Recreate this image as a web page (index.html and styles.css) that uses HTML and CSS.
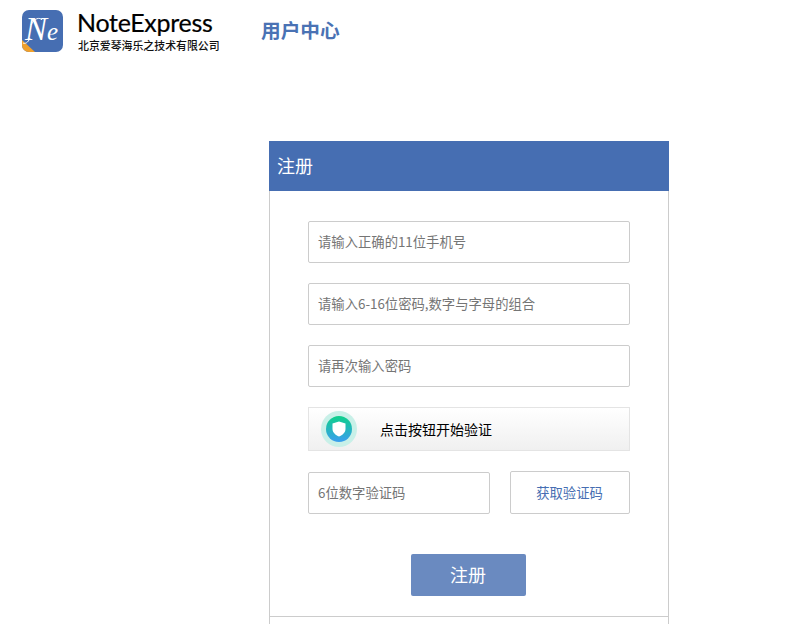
FILE: index.html
```html
<!DOCTYPE html>
<html lang="zh-CN">
<head>
<meta charset="utf-8">
<title>用户中心</title>
<link rel="stylesheet" href="styles.css">
</head>
<body>
<header class="topbar">
  <div class="brand">
    <svg class="logo" width="41" height="42" viewBox="0 0 41 42">
      <defs><clipPath id="lc"><rect width="41" height="42" rx="7"/></clipPath></defs>
      <g clip-path="url(#lc)">
        <rect width="41" height="42" fill="#466eb2"/>
        <polygon points="0,30 13,42 0,42" fill="#f0a02c"/>
        <path d="M1 33 C3 34 6 33 8 28" fill="none" stroke="#fff" stroke-width="1"/>
        <path d="M9 15 C12 8 18 7 20 10" fill="none" stroke="#fff" stroke-width="1"/>
      </g>
      <text class="logo-text" x="3" y="30">N<tspan class="logo-e">e</tspan></text>
    </svg>
    <div class="brand-text">
      <div class="brand-name">NoteExpress</div>
      <div class="brand-sub">北京爱琴海乐之技术有限公司</div>
    </div>
  </div>
  <div class="page-title">用户中心</div>
</header>
<main class="card">
  <div class="card-head">注册</div>
  <form class="card-body">
    <input class="field" type="text" placeholder="请输入正确的11位手机号">
    <input class="field" type="text" placeholder="请输入6-16位密码,数字与字母的组合">
    <input class="field" type="text" placeholder="请再次输入密码">
    <div class="captcha">
      <span class="captcha-ring">
        <span class="captcha-dot">
          <svg width="14" height="16" viewBox="0 0 14 16"><path d="M7 0.5 L13.5 2.5 V8 C13.5 11.5 10.5 14.3 7 15.5 C3.5 14.3 0.5 11.5 0.5 8 V2.5 Z" fill="#fff"/></svg>
        </span>
      </span>
      <span class="captcha-text">点击按钮开始验证</span>
    </div>
    <div class="code-row">
      <input class="field code-input" type="text" placeholder="6位数字验证码">
      <button class="code-btn" type="button">获取验证码</button>
    </div>
    <button class="submit" type="button">注册</button>
  </form>
  <div class="card-foot"></div>
</main>
</body>
</html>
```
FILE: styles.css
```css
* { box-sizing: border-box; }
html, body { margin: 0; padding: 0; height: 624px; overflow: hidden; background: #fff; }
body { font-family: "Noto Sans CJK SC", "Liberation Sans", sans-serif; color: #333; }

.topbar { display: flex; align-items: flex-start; height: 141px; padding: 10px 0 0 22px; }
.brand { display: flex; width: 240px; }
.logo { flex: none; }
.logo-text { font-family: "Liberation Serif", serif; font-style: italic; font-size: 33px; fill: #fff; }
.logo-e { font-size: 25px; }
.brand-text { margin-left: 14px; }
.brand-name { font-family: "Lato", sans-serif; font-size: 25px; line-height: 24px; color: #000; letter-spacing: -0.3px; -webkit-text-stroke: 0.2px #000; }
.brand-sub { font-size: 10.9px; line-height: 14px; margin: 4px 0 0 1px; color: #111; font-weight: 500; white-space: nowrap; }
.page-title { font-size: 19.7px; line-height: 28px; margin-top: 6px; margin-left: -1px; font-weight: 700; color: #4a72b4; }

.card { width: 400px; margin-left: 269px; border-left: 1px solid #ccc; border-right: 1px solid #ccc; }
.card-head { height: 50px; margin: 0 -1px; padding-left: 8px; background: #466eb2; color: #fff; font-size: 18px; line-height: 48px; }
.card-body { display: flex; flex-direction: column; align-items: flex-start; padding: 30px 0 20px 38px; }
.field { display: block; width: 322px; height: 42px; margin-bottom: 20px; padding: 0 9px 2px; border: 1px solid #ccc; border-radius: 2px; background: #fff; font-family: inherit; font-size: 13.33px; color: #333; outline: none; }
.field::placeholder { color: #757575; opacity: 1; }

.captcha { display: flex; align-items: center; width: 322px; height: 44px; padding-left: 12px; border: 1px solid #e4e4e4; background: linear-gradient(#fff, #f0f0f0); }
.captcha-ring { display: flex; align-items: center; justify-content: center; width: 36px; height: 36px; border-radius: 50%; background: #c8f0e8; }
.captcha-dot { display: flex; align-items: center; justify-content: center; width: 26px; height: 26px; border-radius: 50%; background: linear-gradient(#0ed08a, #3a9ef0); }
.captcha-text { margin-left: 23px; font-size: 14px; color: #000; padding-bottom: 1px; }

.code-row { display: flex; align-items: flex-end; gap: 20px; width: 322px; height: 43px; margin-top: 20px; }
.code-input { width: 182px; margin: 0; }
.code-btn { width: 120px; height: 43px; padding: 0 1px 1px 0; border: 1px solid #ccc; border-radius: 2px; background: #fff; color: #466eb2; font-family: inherit; font-size: 13.33px; }
.submit { align-self: flex-start; width: 115px; height: 42px; margin: 40px 0 0 103px; padding: 0 1px 3px 0; border: 0; border-radius: 2px; background: #6a8ac0; color: #fff; font-family: inherit; font-size: 18px; }
.card-foot { height: 8px; border-top: 1px solid #ccc; }
```
